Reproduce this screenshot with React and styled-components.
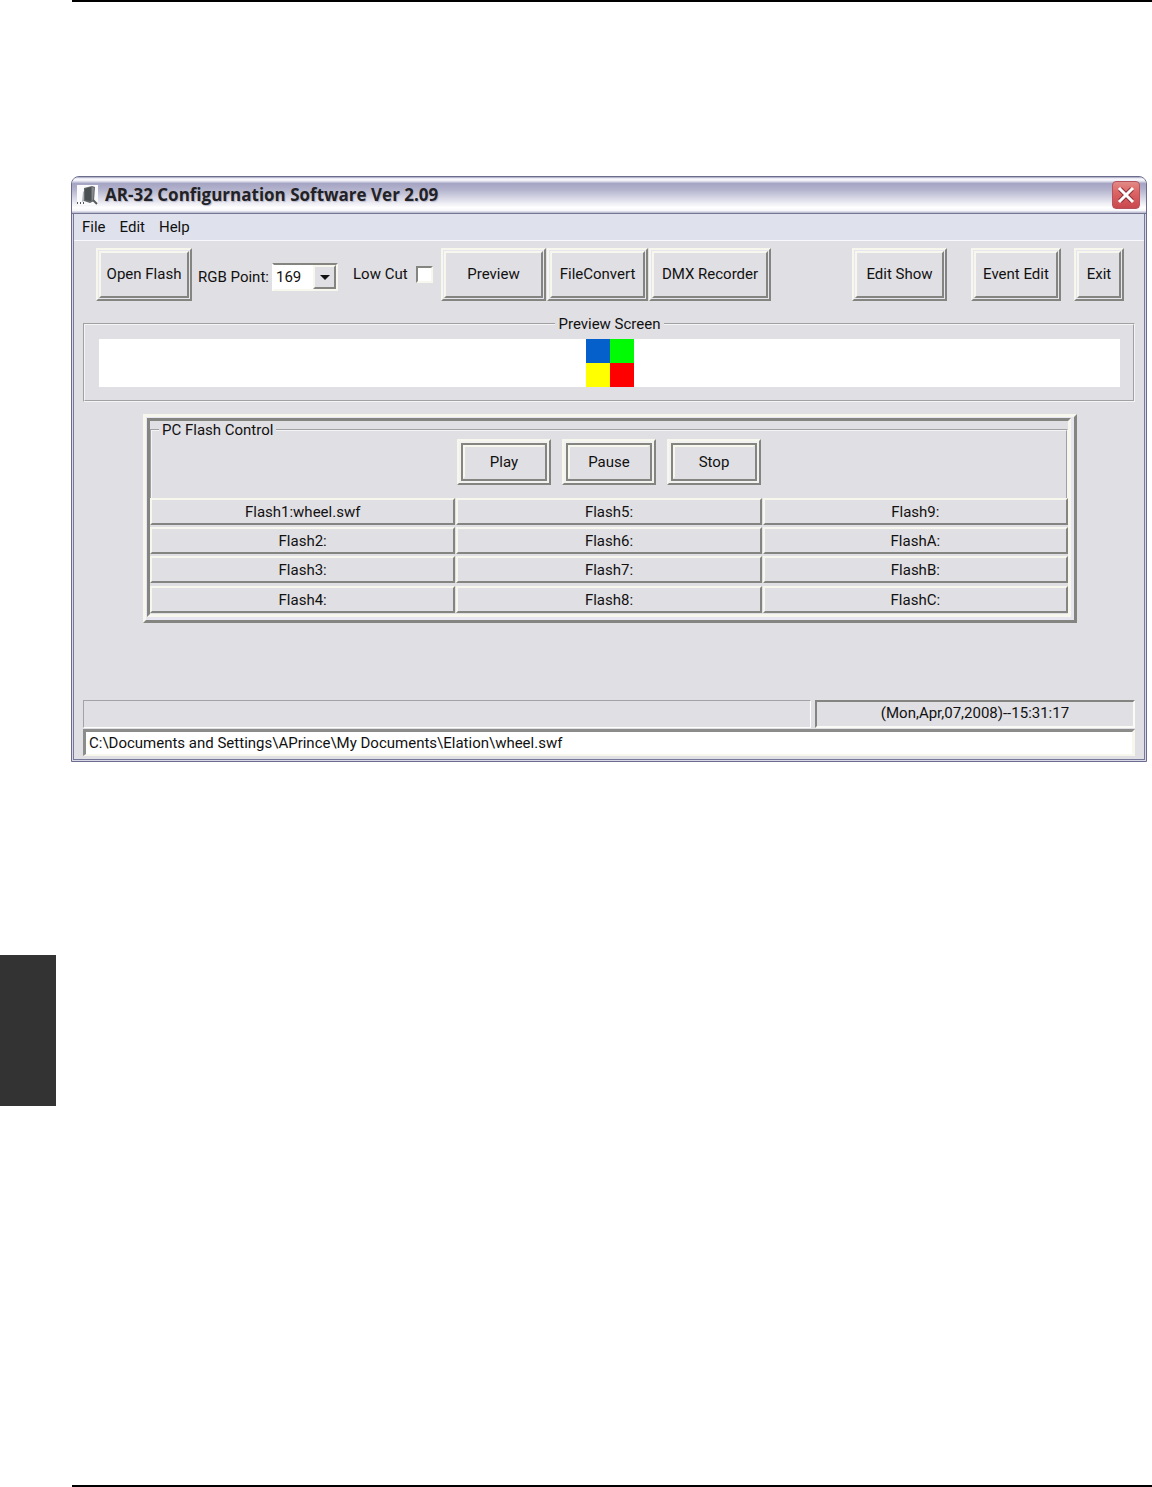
import React, { useState } from 'react'
import styled, { createGlobalStyle } from 'styled-components';

const FLASH_ROWS = [
  ['Flash1:wheel.swf', 'Flash5:', 'Flash9:'],
  ['Flash2:', 'Flash6:', 'FlashA:'],
  ['Flash3:', 'Flash7:', 'FlashB:'],
  ['Flash4:', 'Flash8:', 'FlashC:'],
];

const App = () => {
  const [point, setPoint] = useState('169');
  const [lowCut, setLowCut] = useState(false);
  const [path, setPath] = useState(
    'C:\\Documents and Settings\\APrince\\My Documents\\Elation\\wheel.swf'
  );

  return (
    <>
      <GlobalStyle />
      <Page>
        <Margin>
          <SectionTab />
        </Margin>
        <Sheet>
          <Window>
            <TitleBar>
              <AppIcon />
              <Title>AR-32 Configurnation Software Ver 2.09</Title>
              <CloseButton type="button" aria-label="Close">
                <svg width="18" height="18" viewBox="0 0 18 18" fill="none">
                  <path d="M3 3L15 15M15 3L3 15" stroke="#8d3038" strokeWidth="5" />
                  <path d="M2 2L16 16M16 2L2 16" stroke="#fff" strokeWidth="3" />
                </svg>
              </CloseButton>
            </TitleBar>

            <MenuBar>
              <MenuItem type="button">File</MenuItem>
              <MenuItem type="button">Edit</MenuItem>
              <MenuItem type="button">Help</MenuItem>
            </MenuBar>

            <Body>
              <Toolbar>
                <ToolButton width="96">Open Flash</ToolButton>
                <PointField>
                  <label htmlFor="point">RGB Point:</label>
                  <SelectBox>
                    <select
                      id="point"
                      value={point}
                      onChange={(e) => setPoint(e.target.value)}
                    >
                      <option>169</option>
                      <option>170</option>
                    </select>
                    <SelectArrow>
                      <svg width="10" height="5" viewBox="0 0 10 5">
                        <path d="M0 0H10L5 5Z" fill="#111" />
                      </svg>
                    </SelectArrow>
                  </SelectBox>
                </PointField>
                <CutField>
                  Low Cut
                  <input
                    type="checkbox"
                    checked={lowCut}
                    onChange={(e) => setLowCut(e.target.checked)}
                  />
                </CutField>
                <ButtonGroup>
                  <ToolButton width="105">Preview</ToolButton>
                  <ToolButton width="101">FileConvert</ToolButton>
                  <ToolButton width="122">DMX Recorder</ToolButton>
                </ButtonGroup>
                <ShowGroup>
                  <ToolButton width="95">Edit Show</ToolButton>
                  <ToolButton width="90">Event Edit</ToolButton>
                </ShowGroup>
                <ToolButton width="50">Exit</ToolButton>
              </Toolbar>

              <PreviewGroup>
                <legend>Preview Screen</legend>
                <Screen>
                  <svg width="48" height="48" viewBox="0 0 48 48">
                    <path d="M0 0H24V24H0Z" fill="#0560cc" />
                    <path d="M24 0H48V24H24Z" fill="#00fb04" />
                    <path d="M0 24H24V48H0Z" fill="#ffff00" />
                    <path d="M24 24H48V48H24Z" fill="#fe0000" />
                  </svg>
                </Screen>
              </PreviewGroup>

              <ControlPanel>
                <ControlWell>
                  <ControlGroup>
                    <legend>PC Flash Control</legend>
                    <Transport>
                      <PlayerButton>Play</PlayerButton>
                      <PlayerButton>Pause</PlayerButton>
                      <PlayerButton>Stop</PlayerButton>
                    </Transport>
                  </ControlGroup>
                  <FlashGrid>
                    {FLASH_ROWS.map((row) => (
                      <FlashRow key={row[0]}>
                        {row.map((name) => (
                          <FlashButton type="button" key={name}>
                            {name}
                          </FlashButton>
                        ))}
                      </FlashRow>
                    ))}
                  </FlashGrid>
                </ControlWell>
              </ControlPanel>

              <StatusBar>
                <Message />
                <Clock>(Mon,Apr,07,2008)--15:31:17</Clock>
              </StatusBar>
              <PathInput
                aria-label="Flash file"
                value={path}
                onChange={(e) => setPath(e.target.value)}
              />
            </Body>
          </Window>
        </Sheet>
      </Page>
    </>
  );
};

export default App

const ToolButton = ({ width, children }) => (
  <Raised type="button" $width={width}>
    <RaisedFace>{children}</RaisedFace>
  </Raised>
);

const PlayerButton = ({ children }) => (
  <Player type="button">
    <PlayerRing>
      <PlayerFace>{children}</PlayerFace>
    </PlayerRing>
  </Player>
);

const AppIcon = () => (
  <svg width="21" height="20" viewBox="0 0 21 20">
    <path d="M0 0H21V20H0Z" fill="#fafafc" />
    <path d="M7 3L15 1L18 2L17 16L13 18L7 16Z" fill="#65696c" />
    <path d="M8 4L14 2V16L8 15Z" fill="#4b5053" />
    <path d="M15 2L17 3L16 15L15 16Z" fill="#85898c" />
    <path d="M6 7L7 6V16L5 17Z" fill="#aeb2b5" />
    <path d="M16 15L20 19" stroke="#55595c" strokeWidth="2" />
    <path d="M0 18H9" stroke="#55595c" strokeWidth="2" strokeDasharray="1 2" />
  </svg>
);

const GlobalStyle = createGlobalStyle`
  * {
    box-sizing: border-box;
  }

  body {
    margin: 0;
    background: #fff;
  }

  body, button, input, select {
    font-family: Roboto, "Liberation Sans", sans-serif;
    font-size: 15px;
    line-height: 18px;
    color: #111;
  }
`;

const Page = styled.div`
  display: flex;
  gap: 16px;
  min-height: 100vh;
`;

const Margin = styled.aside`
  flex: 0 0 56px;
  padding-top: 955px;
`;

const SectionTab = styled.div`
  height: 151px;
  background: #333;
`;

const Sheet = styled.main`
  flex: 1;
  min-width: 0;
  padding-top: 174px;
  border-top: 2px solid #000;
  border-bottom: 2px solid #000;
`;

const Window = styled.section`
  margin: 0 5px 0 -1px;
  padding: 0 1px 1px;
  border: 1px solid #6b6c8d;
  border-radius: 8px 8px 0 0;
  background: #d9d9e8;
  overflow: hidden;
`;

const TitleBar = styled.header`
  display: flex;
  align-items: center;
  gap: 7px;
  height: 37px;
  margin: 0 -1px;
  padding: 0 6px 0 5px;
  border-bottom: 1px solid #747592;
  background: linear-gradient(
    #9a9ab8 0%,
    #fafaff 5%,
    #f0f0f8 10%,
    #a5a5c4 18%,
    #b4b4ce 36%,
    #d9d9e7 60%,
    #ffffff 85%,
    #f8f8fc 93%,
    #b4b4cc 100%
  );
`;

const Title = styled.h1`
  flex: 1;
  margin: 0;
  font-family: "Open Sans", "Noto Sans", sans-serif;
  font-size: 17px;
  line-height: 24px;
  font-weight: bold;
  color: #222226;
  text-shadow: 1px 1px 1px #b4b4c6;
`;

const CloseButton = styled.button`
  display: flex;
  align-items: center;
  justify-content: center;
  width: 28px;
  height: 28px;
  padding: 0;
  border: 1px solid #b5525c;
  border-radius: 4px;
  background: linear-gradient(#e18a86, #dc6565 40%, #c9484e);
`;

const MenuBar = styled.nav`
  display: flex;
  gap: 14px;
  height: 27px;
  padding: 0 8px 2px;
  border: solid #77789a;
  border-width: 0 1px;
  background: #dfe2ec;
  box-shadow: inset 0 -1px #f9f9fc;
`;

const MenuItem = styled.button`
  padding: 0;
  border: none;
  background: none;
`;

const Body = styled.div`
  padding: 7px 9px 3px;
  border: 1px solid #77789a;
  border-top: none;
  background: #e0dfe3;
`;

const Toolbar = styled.div`
  display: flex;
  align-items: flex-start;
  padding: 0 11px 0 13px;
`;

const Raised = styled.button`
  display: flex;
  flex: 0 0 auto;
  width: ${(props) => props.$width}px;
  height: 53px;
  padding: 1px;
  border: 2px solid;
  border-color: #f7f7ee #848480 #848480 #f7f7ee;
  background: #e6e5f0;
`;

const RaisedFace = styled.span`
  display: flex;
  flex: 1;
  align-items: center;
  justify-content: center;
  padding-bottom: 2px;
  border: 2px solid;
  border-color: #f7f7ee #848480 #848480 #f7f7ee;
  background: #e0dfe3;
  white-space: nowrap;
`;

const PointField = styled.div`
  display: flex;
  align-items: center;
  margin: 15px 15px 0 6px;

  label {
    width: 74px;
    white-space: nowrap;
  }
`;

const SelectBox = styled.div`
  position: relative;
  width: 66px;

  select {
    display: block;
    width: 100%;
    height: 28px;
    padding: 0 2px;
    appearance: none;
    border: 2px solid;
    border-color: #848480 #f7f7ee #f7f7ee #fff;
    border-radius: 0;
    background: #fff;
  }
`;

const SelectArrow = styled.span`
  position: absolute;
  top: 2px;
  right: 2px;
  bottom: 2px;
  display: flex;
  align-items: center;
  justify-content: center;
  width: 23px;
  border: 2px solid;
  border-color: #f7f7ee #848480 #848480 #f7f7ee;
  background: #e0dfe3;
  pointer-events: none;
`;

const CutField = styled.label`
  display: flex;
  align-items: center;
  gap: 8px;
  width: 88px;
  margin-top: 17px;
  white-space: nowrap;

  input {
    flex: 0 0 17px;
    height: 17px;
    margin: 0;
    appearance: none;
    border: 2px solid;
    border-color: #848480 #f7f7ee #f7f7ee #848480;
    background: #fff;
  }

  input:checked {
    background: #333;
  }
`;

const ButtonGroup = styled.div`
  display: flex;
  gap: 1px;
`;

const ShowGroup = styled.div`
  display: flex;
  gap: 24px;
  margin: 0 13px 0 auto;
`;

const Group = styled.fieldset`
  min-width: 0;
  margin: 0;
  border: 2px groove #f4f4f6;

  legend {
    padding: 0 3px;
  }
`;

const PreviewGroup = styled(Group)`
  margin-top: 14px;
  padding: 6px 13px 13px 14px;

  legend {
    margin: 0 auto;
  }
`;

const Screen = styled.div`
  display: flex;
  justify-content: center;
  height: 48px;
  background: #fff;
`;

const ControlPanel = styled.section`
  margin: 12px 58px 0 60px;
  padding: 1px 3px 3px 1px;
  border: 3px solid;
  border-color: #f7f7ee #848480 #848480 #f7f7ee;
  background: #e6e5f0;
`;

const ControlWell = styled.div`
  padding-bottom: 1px;
  border: 3px solid;
  border-color: #848480 #f7f7ee #f7f7ee #848480;
  background: #e0dfe3;
`;

const ControlGroup = styled(Group)`
  padding: 0;
  border-bottom: none;

  legend {
    margin-left: 7px;
  }
`;

const Transport = styled.div`
  display: flex;
  justify-content: center;
  gap: 11px;
  padding-bottom: 13px;
`;

const Player = styled.button`
  display: flex;
  width: 94px;
  height: 46px;
  padding: 2px;
  border: 2px solid;
  border-color: #f7f7ee #848480 #848480 #f7f7ee;
  background: #f2f2f0;
`;

const PlayerRing = styled.span`
  display: flex;
  flex: 1;
  border: 2px solid #848480;
`;

const PlayerFace = styled.span`
  display: flex;
  flex: 1;
  align-items: center;
  justify-content: center;
  border: 2px solid;
  border-color: #f7f7ee #e0dfe3 #e0dfe3 #f7f7ee;
  background: #e0dfe3;
`;

const FlashGrid = styled.div`
  display: grid;
  gap: 2px;
`;

const FlashRow = styled.div`
  display: grid;
  grid-template-columns: repeat(3, 1fr);
  gap: 1px;

  &:last-child {
    margin-top: 1px;
  }
`;

const FlashButton = styled.button`
  height: 27px;
  padding: 0;
  border: 2px solid;
  border-color: #f7f7ee #848480 #848480 #f7f7ee;
  background: #e0dfe3;
`;

const StatusBar = styled.footer`
  display: flex;
  gap: 4px;
  height: 28px;
  margin-top: 77px;
`;

const Message = styled.div`
  flex: 1;
  border: 1px solid;
  border-color: #a3a3a6 #fff #fff #a3a3a6;
`;

const Clock = styled.div`
  flex: 0 0 320px;
  border: 2px solid;
  border-color: #848480 #fafaf6 #fafaf6 #848480;
  line-height: 22px;
  text-align: center;
`;

const PathInput = styled.input`
  display: block;
  width: 100%;
  height: 27px;
  margin-top: 1px;
  padding: 0 3px;
  border: solid;
  border-width: 3px 3px 2px;
  border-color: #8c8c8a #f7f7ee #f7f7ee #8c8c8a;
  background: #fff;
`;
